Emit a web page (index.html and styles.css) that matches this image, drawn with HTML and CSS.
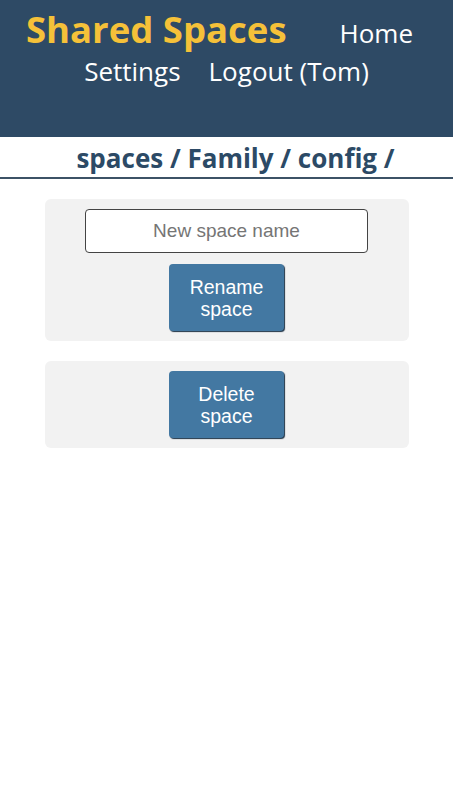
FILE: index.html
```html
<!DOCTYPE html>
<html>
<head>
<meta charset="utf-8">
<link rel="stylesheet" href="styles.css">
</head>
<body>
<header class="topbar">
  <nav class="nav">
    <a class="brand" href="#">Shared Spaces</a>
    <a class="nav-link" href="#">Home</a>
    <a class="nav-link" href="#">Settings</a>
    <a class="nav-link" href="#">Logout (Tom)</a>
  </nav>
</header>
<div class="crumbs">spaces / Family / config /</div>
<main class="content">
  <section class="card">
    <input class="name-input" type="text" placeholder="New space name">
    <button class="btn">Rename<br>space</button>
  </section>
  <section class="card">
    <button class="btn">Delete<br>space</button>
  </section>
</main>
</body>
</html>
```
FILE: styles.css
```css
* { box-sizing: border-box; }
body {
  margin: 0;
  font-family: "Open Sans", "Noto Sans", sans-serif;
  background: #fff;
}
.topbar {
  background: #2e4a65;
  height: 137px;
  padding-top: 6px;
}
.nav {
  display: flex;
  flex-wrap: wrap;
  justify-content: center;
  align-items: baseline;
}
.brand {
  color: #f5c139;
  font-weight: 700;
  font-size: 36.5px;
  text-decoration: none;
  margin-right: 39px;
  line-height: 46px;
}
.nav-link {
  color: #fff;
  font-size: 26px;
  text-decoration: none;
  padding: 0 14px;
  line-height: 38px;
}
.crumbs {
  text-align: center;
  color: #2c4a66;
  font-weight: 700;
  font-size: 26px;
  padding-left: 18px;
  height: 42px;
  line-height: 42px;
  border-bottom: 2px solid #3c5266;
}
.content {
  display: flex;
  flex-direction: column;
  align-items: center;
  gap: 20px;
  padding-top: 20px;
}
.card {
  width: 364px;
  background: #f2f2f2;
  border-radius: 6px;
  padding: 10px 0;
  display: flex;
  flex-direction: column;
  align-items: center;
  gap: 11px;
}
.name-input {
  width: 283px;
  height: 44px;
  border: 1px solid #444;
  border-radius: 4px;
  background: #fff;
  font-family: "Liberation Sans", Arial, sans-serif;
  font-size: 19px;
  text-align: center;
  color: #333;
}
.name-input::placeholder { color: #757575; }
.btn {
  width: 115px;
  height: 67px;
  background: #4378a2;
  color: #fff;
  border: none;
  border-radius: 4px;
  box-shadow: 1px 1px 1px #1f3346;
  font-family: "Liberation Sans", Arial, sans-serif;
  font-size: 19.5px;
  line-height: 22px;
}
```
